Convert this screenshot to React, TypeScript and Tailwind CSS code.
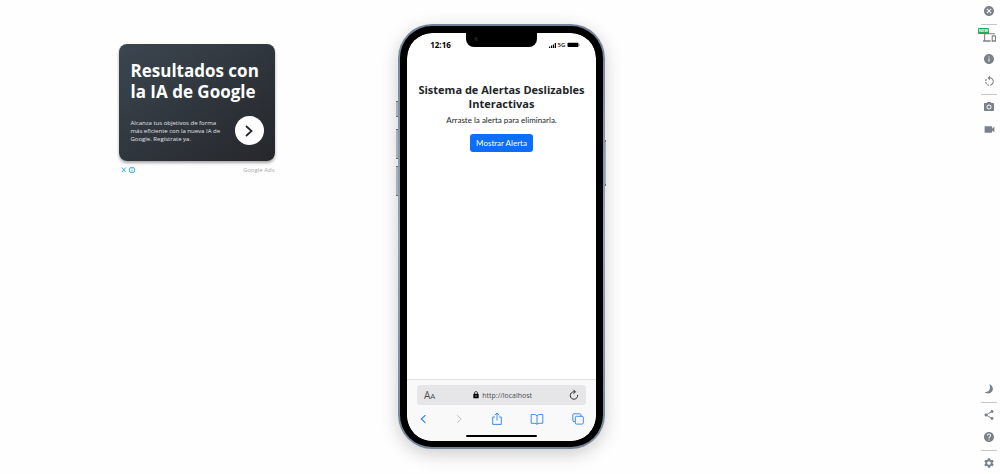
import type { ReactNode } from "react";
import {
  MdCancel,
  MdDevices,
  MdHelp,
  MdInfo,
  MdLock,
  MdPhotoCamera,
  MdRotateLeft,
  MdSettings,
  MdShare,
  MdVideocam,
} from "react-icons/md";

function ToolButton({ label, children }: { label: string; children: ReactNode }) {
  return (
    <button
      type="button"
      aria-label={label}
      className="relative flex size-[22px] items-center justify-center text-[#7b8189]"
    >
      {children}
    </button>
  );
}

function Divider() {
  return (
    <div className="flex h-1 w-4 items-center">
      <div className="h-px w-full bg-[#c6c8ca]" />
    </div>
  );
}

function Toolbar() {
  return (
    <aside className="flex flex-col items-center justify-between">
      <div className="flex flex-col items-center">
        <ToolButton label="Cerrar"><MdCancel size={12} /></ToolButton>
        <Divider />
        <ToolButton label="Dispositivos">
          <MdDevices size={13} />
          <span className="absolute top-[2px] left-0 h-[6px] w-[11px] rounded-[1px] bg-[#22ab58] text-center text-[4px] leading-[6px] font-bold text-white">
            NEW
          </span>
        </ToolButton>
        <ToolButton label="Información"><MdInfo size={12} /></ToolButton>
        <ToolButton label="Rotar"><MdRotateLeft size={13} /></ToolButton>
        <Divider />
        <ToolButton label="Captura"><MdPhotoCamera size={12} /></ToolButton>
        <ToolButton label="Grabar"><MdVideocam size={13} /></ToolButton>
      </div>
      <div className="flex flex-col items-center">
        <ToolButton label="Modo oscuro">
          <svg viewBox="0 0 10 10" className="size-[10px]" fill="currentColor">
            <path d="M5.2.3C9 1.6 9.8 5.2 8 7.6 6.2 10 2.6 10 .6 8 3.600 8.3 5.3 6.900 5.800 4.700 6.200 3 5.900 1.500 5.200.3z" />
          </svg>
        </ToolButton>
        <Divider />
        <ToolButton label="Compartir"><MdShare size={12} /></ToolButton>
        <ToolButton label="Ayuda"><MdHelp size={12} /></ToolButton>
        <Divider />
        <ToolButton label="Ajustes"><MdSettings size={12} /></ToolButton>
      </div>
    </aside>
  );
}

function Ad() {
  return (
    <section className="w-[156px] pt-11">
      <div className="flex h-[117px] flex-col justify-between rounded-lg bg-linear-to-br from-[#3c4650] via-[#30363d] to-[#25272b] pt-4 pr-[11px] pb-4 pl-3 text-white shadow-[0_2px_3px_rgba(0,0,0,0.35)]">
        <h2 className="text-[17px] leading-[21px] font-bold whitespace-nowrap">
          Resultados con
          <br />
          la IA de Google
        </h2>
        <div className="flex items-center justify-between">
          <p className="text-[6px] leading-[8px] whitespace-nowrap text-[#e2e4e6]">
            Alcanza tus objetivos de forma
            <br />
            más eficiente con la nueva IA de
            <br />
            Google. Regístrate ya.
          </p>
          <button
            type="button"
            aria-label="Abrir anuncio"
            className="flex size-[29px] items-center justify-center rounded-full bg-white"
          >
            <svg viewBox="0 0 12 14" className="h-[14px] w-3" fill="none" stroke="#24272b" strokeWidth="1.8">
              <path d="M3 2l5.5 5L3 12" />
            </svg>
          </button>
        </div>
      </div>
      <div className="flex items-center justify-between pt-1 pl-[2px]">
        <svg viewBox="0 0 16 8" className="h-2 w-4" fill="none" stroke="#2ba7dc" strokeWidth="0.9">
          <path d="M0.8 1.5l4 4.6M4.8 1.5l-4 4.6" />
          <circle cx="11" cy="4" r="2.8" />
          <path d="M11 3.6v2M11 2.1v.8" />
        </svg>
        <span className="text-[6px] leading-[10px] text-[#aaaaaa]">Google Ads</span>
      </div>
    </section>
  );
}

function StatusBar() {
  return (
    <div className="grid h-6 grid-cols-[1fr_71px_1fr] text-black">
      <span className="pl-2 text-center text-[8px] leading-6 font-bold">12:16</span>
      <div className="relative h-[14px] rounded-b-lg bg-black">
        <div className="absolute top-1 left-2 size-1 rounded-full bg-[#17191d]" />
      </div>
      <div className="flex items-center justify-center gap-[2px] pr-1">
        <svg viewBox="0 0 7 5" className="h-[5px] w-[7px]" fill="black">
          <path d="M0 3.5h1.2V5H0zM2 2.6h1.2V5H2zM3.9 1.4h1.2V5H3.9zM5.8 0H7v5H5.8z" />
        </svg>
        <span className="text-[6px] leading-6 font-semibold">5G</span>
        <svg viewBox="0 0 13 6" className="h-[6px] w-[13px]">
          <rect x="0.5" y="0.8" width="11" height="4.2" rx="1" fill="black" />
          <path d="M12.1 2v2q.7-.3.7-1t-.7-1" fill="#555" />
        </svg>
      </div>
    </div>
  );
}

function BrowserBar() {
  return (
    <div className="border-t border-[#dedfe0] bg-[#f9f9fa]">
      <div className="mx-[10px] mt-[5px] flex h-5 items-center justify-between rounded-[3px] bg-[#e6e6e8] px-[7px] text-[#4b4c4f]">
        <button type="button" className="text-[10px] leading-none">
          A<span className="text-[8px]">A</span>
        </button>
        <span className="flex items-center gap-[2px] text-[7px] leading-none">
          <MdLock size={8} className="text-black" />
          http://localhost
        </span>
        <button type="button" aria-label="Recargar">
          <svg viewBox="0 0 10 12" className="h-3 w-[10px]" fill="none" stroke="#292a2c" strokeWidth="1">
            <path d="M8.6 6A3.7 3.7 0 1 1 5 2.8h1" />
            <path d="M4.5.8l2 2-2 2" />
          </svg>
        </button>
      </div>
      <nav className="flex h-7 items-center justify-between px-3 text-[#2b7ff5]">
        <button type="button" aria-label="Atrás">
          <svg viewBox="0 0 8 12" className="h-3 w-2" fill="none" stroke="currentColor" strokeWidth="1.1">
            <path d="M6.5 2.2L2.3 6l4.2 3.8" />
          </svg>
        </button>
        <button type="button" aria-label="Adelante" className="text-[#c5c6c9]">
          <svg viewBox="0 0 8 12" className="h-3 w-2" fill="none" stroke="currentColor" strokeWidth="1">
            <path d="M2 2.2L6.2 6 2 9.8" />
          </svg>
        </button>
        <button type="button" aria-label="Compartir página">
          <svg viewBox="0 0 12 14" className="h-[14px] w-3" fill="none" stroke="currentColor" strokeWidth="0.9">
            <path d="M4 5H1.7v7.4h8.6V5H8M6 8.5V1M3.8 3.2L6 1l2.2 2.2" />
          </svg>
        </button>
        <button type="button" aria-label="Marcadores">
          <svg viewBox="0 0 14 12" className="h-3 w-[14px]" fill="none" stroke="currentColor" strokeWidth="0.9">
            <path d="M7 2.8Q6 1.5 4.2 1.5H1.2v8.8h3.4q1.6 0 2.4 1 .8-1 2.4-1h3.4V1.5h-3Q8 1.5 7 2.8zM7 2.8v8.5" />
          </svg>
        </button>
        <button type="button" aria-label="Pestañas">
          <svg viewBox="0 0 12 12" className="h-3 w-3" fill="none" stroke="currentColor" strokeWidth="0.9">
            <rect x="3.3" y="3.3" width="8" height="7.8" rx="1.2" />
            <path d="M3.2 8.6H2q-1.2 0-1.2-1.2V2Q.8.8 2 .8h5.8Q9 .8 9 2v1.2" />
          </svg>
        </button>
      </nav>
      <div className="mx-auto mt-[2px] mb-1 h-[2px] w-[71px] rounded-full bg-black" />
    </div>
  );
}

function Phone() {
  return (
    <div className="relative flex w-[207px] rounded-[34px] bg-linear-to-b from-[#76849a] via-[#93a3b4] to-[#76849a] p-[2px] shadow-[0_5px_18px_rgba(0,0,0,0.2)]">
      <div className="absolute top-[77px] -left-[2px] h-4 w-[2px] border-y border-[#666b72] bg-[#a8b2bd]" />
      <div className="absolute top-[105px] -left-[2px] h-[30px] w-[2px] border-y border-[#666b72] bg-[#a8b2bd]" />
      <div className="absolute top-[142px] -left-[2px] h-[30px] w-[2px] border-y border-[#666b72] bg-[#a8b2bd]" />
      <div className="absolute top-[116px] -right-[1px] h-[46px] w-px border-y-2 border-[#666b72] bg-[#a8b2bd]" />
      <div className="flex flex-1 flex-col overflow-hidden rounded-[32px] border-[7px] border-b-[6px] border-black bg-black">
        <div className="flex flex-1 flex-col overflow-hidden rounded-[25px] bg-white">
          <StatusBar />
          <main className="flex flex-1 flex-col items-center pt-[26px] text-center text-[#212529]">
            <h1 className="text-[11px] leading-[14px] font-bold whitespace-nowrap">
              Sistema de Alertas Deslizables
              <br />
              Interactivas
            </h1>
            <p className="mt-[3px] font-['Lato','Open_Sans',sans-serif] text-[8px] leading-[12px]">
              Arraste la alerta para eliminarla.
            </p>
            <button
              type="button"
              className="mt-2 rounded-[3px] bg-[#0d6efd] px-[6px] py-[3px] font-['Lato','Open_Sans',sans-serif] text-[8px] leading-[12px] text-white"
            >
              Mostrar Alerta
            </button>
          </main>
          <BrowserBar />
        </div>
      </div>
    </div>
  );
}

export default function App() {
  return (
    <div className="grid min-h-screen grid-cols-[1fr_auto_1fr] bg-[#fefefe] pl-[3px] font-['Open_Sans',sans-serif]">
      <div className="flex items-start justify-center pr-2">
        <Ad />
      </div>
      <div className="flex pt-6 pb-[25px]">
        <Phone />
      </div>
      <div className="flex justify-end">
        <Toolbar />
      </div>
    </div>
  );
}
